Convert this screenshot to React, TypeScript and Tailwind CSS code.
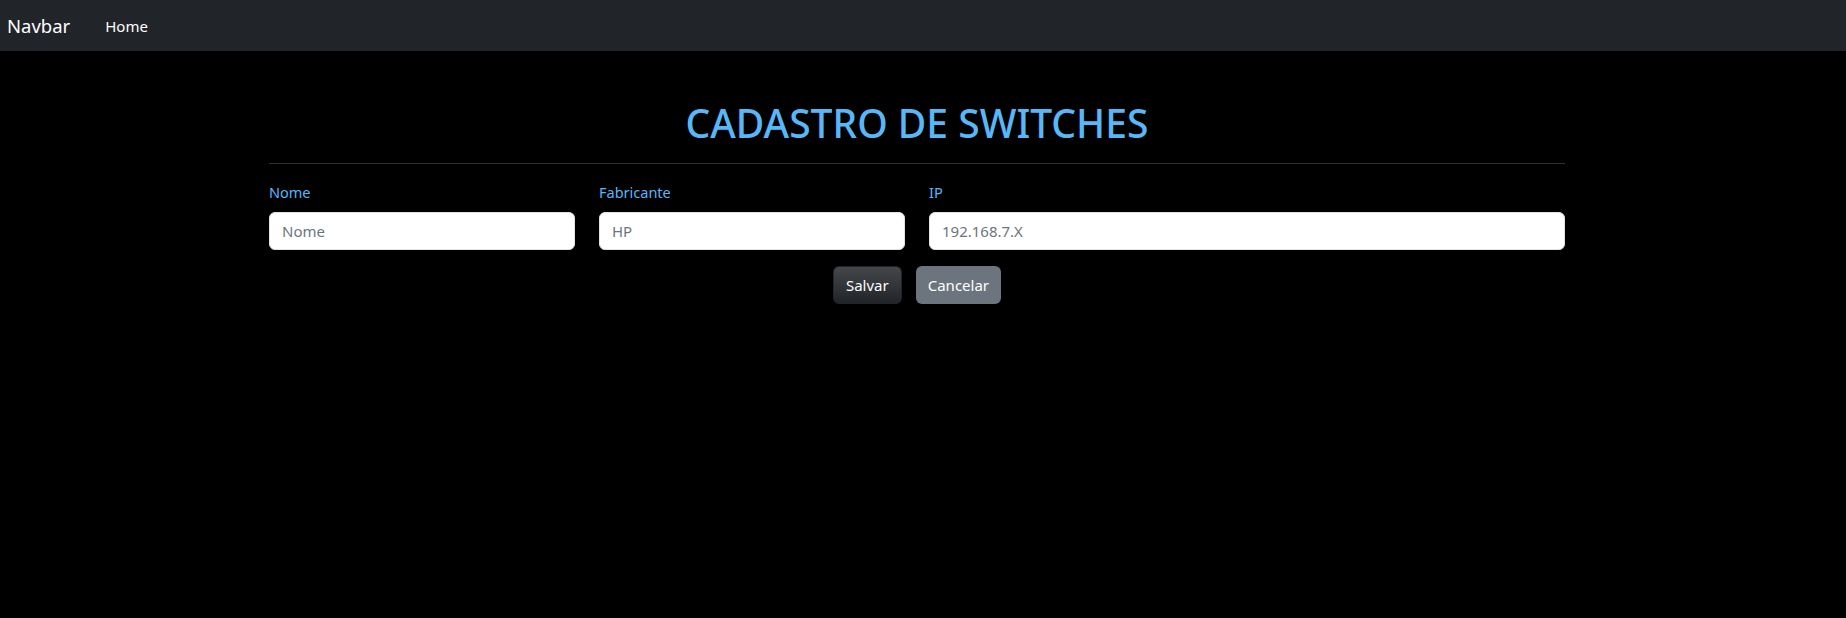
import React from "react";

const fields = [
  { label: "Nome", placeholder: "Nome", span: "col-span-3" },
  { label: "Fabricante", placeholder: "HP", span: "col-span-3" },
  { label: "IP", placeholder: "192.168.7.X", span: "col-span-6" },
];

export default function App() {
  return (
    <div className="min-h-[618px] bg-black font-['Noto_Sans',sans-serif] text-white">
      <nav className="flex h-[51px] items-center bg-[#212529] px-[7px]">
        <span className="text-[18.5px] leading-[30px] text-white">Navbar</span>
        <a className="ml-[35px] text-[15px] leading-6 text-white">Home</a>
      </nav>

      <div className="mx-auto w-[1296px] -translate-x-[6px]">
        <h1 className="mt-[48px] mb-2 text-center text-[39px] font-medium leading-[48px] text-[#58b7f7]">
          CADASTRO DE SWITCHES
        </h1>
        <hr className="mt-4 border-0 border-t border-[#2b3238]" />

        <form className="mt-4 grid grid-cols-12 gap-x-6">
          {fields.map((f) => (
            <div key={f.label} className={f.span}>
              <label className="mb-2 block text-[14.5px] leading-6 text-[#58b7f7]">{f.label}</label>
              <input
                placeholder={f.placeholder}
                className="block h-[38px] w-full rounded-md border border-[#dee2e6] bg-white px-3 text-[15px] text-[#212529] placeholder:text-[#6c757d] outline-none"
              />
            </div>
          ))}
        </form>

        <div className="mt-4 flex justify-center gap-[14px]">
          <button className="h-[38px] rounded-md border border-[#212529] bg-gradient-to-b from-[#45484b] to-[#212529] px-3 text-[15px] text-white">
            Salvar
          </button>
          <button className="h-[38px] rounded-md bg-[#6c757d] px-3 text-[15px] text-white">
            Cancelar
          </button>
        </div>
      </div>
    </div>
  );
}
